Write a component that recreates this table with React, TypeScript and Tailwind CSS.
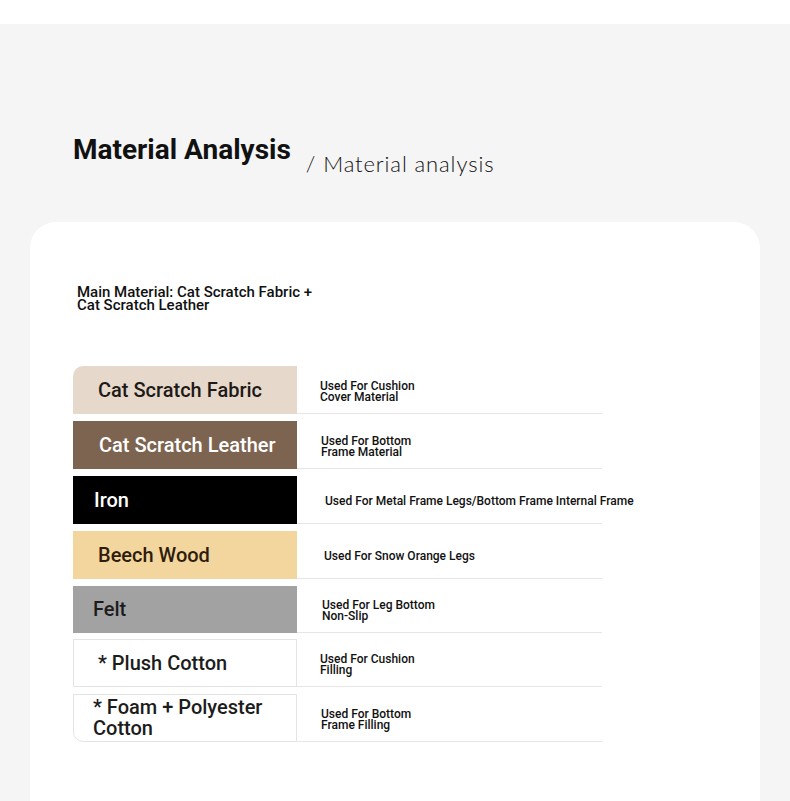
import React from "react";

type Row = {
  name: string[];
  bg: string;
  text: string;
  desc: string[];
  h: string;
  mt: string;
  namePl: string;
  descPl: string;
  border?: boolean;
  rounded?: string;
};

const rows: Row[] = [
  { name: ["Cat Scratch Fabric"], bg: "bg-[#e6d8cb]", text: "text-[#1e1a17]", desc: ["Used For Cushion", "Cover Material"], h: "h-[48px]", mt: "mt-0", namePl: "pl-[25px]", descPl: "pl-[23px]", rounded: "rounded-tl-[10px]" },
  { name: ["Cat Scratch Leather"], bg: "bg-[#7d6450]", text: "text-white", desc: ["Used For Bottom", "Frame Material"], h: "h-[48px]", mt: "mt-[7px]", namePl: "pl-[26px]", descPl: "pl-[24px]" },
  { name: ["Iron"], bg: "bg-black", text: "text-white", desc: ["Used For Metal Frame Legs/Bottom Frame Internal Frame"], h: "h-[48px]", mt: "mt-[7px]", namePl: "pl-[21px]", descPl: "pl-[28px]" },
  { name: ["Beech Wood"], bg: "bg-[#f3d59e]", text: "text-[#2e1c0c]", desc: ["Used For Snow Orange Legs"], h: "h-[48px]", mt: "mt-[7px]", namePl: "pl-[25px]", descPl: "pl-[27px]" },
  { name: ["Felt"], bg: "bg-[#a3a2a3]", text: "text-[#1c1c1c]", desc: ["Used For Leg Bottom", "Non-Slip"], h: "h-[47px]", mt: "mt-[7px]", namePl: "pl-[20px]", descPl: "pl-[25px]" },
  { name: ["* Plush Cotton"], bg: "bg-white", text: "text-[#1c1c1c]", desc: ["Used For Cushion", "Filling"], h: "h-[48px]", mt: "mt-[6px]", namePl: "pl-[24px]", descPl: "pl-[23px]", border: true },
  { name: ["* Foam + Polyester", "Cotton"], bg: "bg-white", text: "text-[#1c1c1c]", desc: ["Used For Bottom", "Frame Filling"], h: "h-[48px]", mt: "mt-[7px]", namePl: "pl-[19px]", descPl: "pl-[24px]", border: true, rounded: "rounded-bl-[10px]" },
];

export default function App() {
  return (
    <div className="w-[790px] h-[801px] overflow-hidden bg-[#f5f5f5] font-['Roboto',sans-serif]">
      <div className="h-[24px] bg-white" />
      <div className="h-[198px] flex items-start pl-[73px] pt-[110px]">
        <h1 className="text-[28px] leading-[32px] font-bold text-[#111]">
          Material Analysis
        </h1>
        <span className="ml-[15px] mt-[16px] text-[22px] leading-[28px] font-light text-[#111] font-['Lato','Noto_Sans',sans-serif] tracking-[0.9px] whitespace-nowrap">
          / Material analysis
        </span>
      </div>
      <div className="mx-[30px] bg-white rounded-t-[26px] h-[600px] pt-[64px]">
        <div className="pl-[47px] text-[15px] leading-[13px] font-medium text-[#111]">
          <div>Main Material: Cat Scratch Fabric +</div>
          <div>Cat Scratch Leather</div>
        </div>
        <div className="mt-[54px] pl-[43px]">
          {rows.map((r, i) => (
            <div key={i} className={`flex ${r.mt}`}>
              <div
                className={`w-[224px] shrink-0 ${r.h} ${r.bg} ${r.text} ${r.namePl} ${r.rounded ?? ""} ${r.border ? "border border-[#e4e4e4]" : ""} flex flex-col justify-center text-[20px] leading-[21px] font-medium whitespace-nowrap`}
              >
                {r.name.map((n, j) => (
                  <div key={j}>{n}</div>
                ))}
              </div>
              <div
                className={`w-[305px] shrink-0 ${r.h} border-b border-[#e6e6e6] ${r.descPl} pt-[4px] flex flex-col justify-center text-[12px] leading-[11px] font-medium text-[#111] whitespace-nowrap`}
              >
                {r.desc.map((d, j) => (
                  <div key={j}>{d}</div>
                ))}
              </div>
            </div>
          ))}
        </div>
      </div>
    </div>
  );
}
